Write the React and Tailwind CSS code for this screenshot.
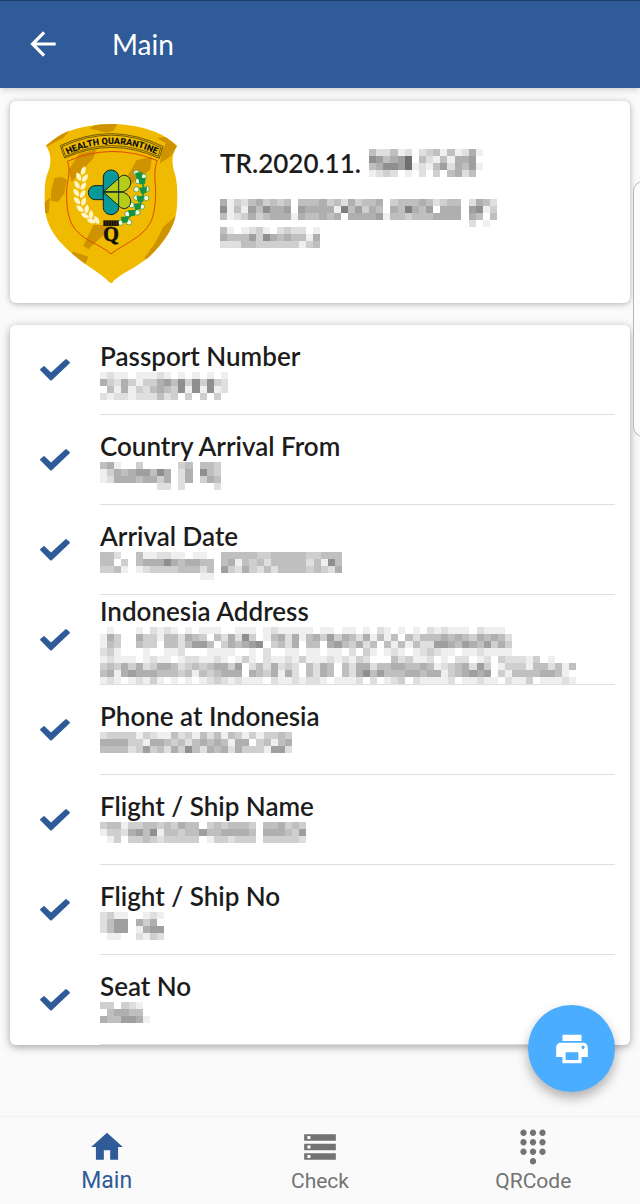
import { MdArrowBack, MdDialpad, MdHome, MdPrint, MdStorage } from 'react-icons/md';

// Each digit is the darkness of one mosaic block
const passport = {
  number: ['4224120234141251', '7645690421415560', '4577691214625461', '1232010203045240'],
  name: [
    '513245343404445342534450344454234402542',
    '714164755606555518463540548546055506713',
    '412353455515445450555561443444555505404',
    '000000000000000000000000000000000002010',
  ],
  country: ['41012310232201', '54446375454415', '22244333333134'],
};

const fields = [
  {
    label: 'Passport Number',
    rows: ['121101112101010101', '532531335647373732', '041513245437171712', '212212224230303030'],
  },
  {
    label: 'Country Arrival From',
    rows: ['45100300000340443', '13545664750250743', '12555455350250354', '00000000220200002'],
  },
  {
    label: 'Arrival Date',
    rows: [
      '4420041122110110044444334444433444',
      '4403045557545544045143424444424174',
      '3341012333344424063253242444434325',
      '0000000000000011000000000000000000',
    ],
  },
  {
    label: 'Indonesia Address',
    rows: [
      '0100010212101011100111012111110110110102101010212111021110',
      '1530053314425430425273014525145363542514140424445454354542',
      '1430043304424664035456703425044056435240414142266546546353',
      '2310001001120001111001020011011011020310121012321101121111',
      '1211101211012211210131021121311121213200042311201022012032221301000',
      '3435352355423434553602425232042540425524455445412345263013331442414',
      '4515655544434143455505435152042540425746444554551345656031444455410',
      '1210121310101012321211102112122101112020123021111201121102113011121',
    ],
  },
  {
    label: 'Phone at Indonesia',
    rows: ['233331321142314241431313343', '555533155434245454155034145', '444423634253742545253331662'],
  },
  {
    label: 'Flight / Ship Name',
    rows: ['34413344343544034344430445343', '13325647144344644555540555436', '01303343233333013323330333332'],
  },
  {
    label: 'Flight / Ship No',
    rows: ['231100121', '246605350', '246601566', '011002132'],
  },
  {
    label: 'Seat No',
    rows: ['3303210', '0455440', '5446651'],
  },
];

const tabs = [
  { label: 'Main', icon: MdHome, active: true },
  { label: 'Check', icon: MdStorage },
  { label: 'QRCode', icon: MdDialpad },
];

function Mosaic({ rows }) {
  const cols = Math.max(...rows.map((row) => row.length));

  return (
    <svg
      width={Math.round((cols * 64) / 9)}
      height={Math.round((rows.length * 64) / 9)}
      viewBox={`0 0 ${cols} ${rows.length}`}
      preserveAspectRatio="none"
      shapeRendering="crispEdges"
      className="block shrink-0"
      aria-label="Hidden"
      role="img"
    >
      {rows.map((row, y) =>
        row.split('').map((level, x) => {
          const tone = 255 - Number(level) * 16;
          return <rect key={`${x}-${y}`} x={x} y={y} width="1" height="1" fill={`rgb(${tone},${tone},${tone})`} />;
        })
      )}
    </svg>
  );
}

function CheckIcon() {
  return (
    <svg width="30" height="22" viewBox="0 0 90 66" className="shrink-0" aria-hidden="true">
      <path
        d="M4 32 L12 25 L33 45 L78 4 L86 11 L33 61 Z"
        fill="#2f5b98"
        stroke="#2f5b98"
        strokeWidth="7"
        strokeLinejoin="round"
      />
    </svg>
  );
}

function Shield() {
  const leaves = [
    [160, 182, 20], [146, 200, -25], [165, 204, 35], [141, 224, -30], [160, 228, 35],
    [139, 248, -35], [158, 252, 30], [141, 272, -40], [161, 275, 20], [150, 296, -50],
    [170, 297, 10], [165, 317, -60], [183, 314, 0], [184, 333, -70], [200, 330, -30],
  ];
  const buds = [
    [319, 188], [341, 200], [324, 213], [350, 237], [319, 238], [349, 264], [319, 263],
    [336, 290], [305, 285], [322, 307], [292, 312], [297, 337], [272, 338],
  ];
  const sprigs = [[328, 195], [337, 212], [341, 240], [332, 266], [324, 288], [307, 308], [285, 328]];

  return (
    <svg width="134" height="162" viewBox="42 36 402 486" className="shrink-0" role="img" aria-label="Health Quarantine">
      <defs>
        <clipPath id="shield">
          <path d="M48 107 Q75 82 110 65 Q175 42 245 42 Q315 42 375 65 Q412 80 441 108 C425 132 424 158 434 190 C443 215 444 270 440 300 C435 350 400 400 360 438 C330 465 295 480 268 499 Q253 509 246 519 Q238 520 229 508 C205 485 165 465 135 438 C90 400 52 360 45 300 C42 265 42 215 53 190 C66 155 63 130 48 107 Z" />
        </clipPath>
        <path id="arc" d="M104 138 Q245 66 388 137" />
      </defs>
      <g clipPath="url(#shield)">
        <rect x="40" y="36" width="410" height="490" fill="#efba00" />
        <g fill="#cf9300">
          <path d="M44 110 L70 80 L118 62 L100 84 L54 108 Z" />
          <path d="M178 55 L205 40 L262 42 L250 62 L230 68 Z" />
          <path d="M380 84 L412 80 L445 108 L420 140 L390 160 L396 118 L408 100 Z" />
          <path d="M147 132 L200 118 L190 145 L125 215 L116 180 Z" />
          <path d="M320 150 L366 140 L360 180 L300 225 L285 210 L300 185 Z" />
          <path d="M73 205 L95 200 L111 210 L103 250 L85 275 L62 272 L64 240 Z" />
          <path d="M43 278 L60 262 L56 308 L42 312 Z" />
          <path d="M190 345 L252 345 L175 418 L160 408 Z" />
          <path d="M130 425 L175 440 L165 464 L120 436 Z" />
          <path d="M445 312 L400 350 L375 400 L342 445 L360 450 L450 350 Z" />
        </g>
      </g>
      <path
        d="M112 154 Q245 96 382 152 C370 180 376 210 377 250 C376 290 371 320 360 340 C335 385 275 405 243 432 C212 402 150 392 124 340 C112 310 109 280 110 240 C112 210 124 180 112 154 Z"
        fill="none"
        stroke="#e0480c"
        strokeWidth="3"
      />
      <path
        d="M91 107 Q245 34 398 109 L388 145 Q245 80 104 144 Z M96 110 Q245 40 392 112 L385 139 Q245 75 107 139 Z"
        fill="none"
        stroke="#332708"
        strokeWidth="2"
      />
      <text className="font-['Roboto']" fontSize="27" fontWeight="900" fill="#111" textAnchor="middle">
        <textPath href="#arc" startOffset="50%">HEALTH QUARANTINE</textPath>
      </text>
      <g fill="#fff5c9">
        {leaves.map(([x, y, turn]) => (
          <path key={`${x}-${y}`} transform={`translate(${x} ${y}) rotate(${turn})`} d="M0 -14 C9 -6 9 7 0 14 C-9 7 -9 -6 0 -14 Z" />
        ))}
      </g>
      <path d="M322 188 C350 218 346 278 310 310 Q294 326 272 338" fill="none" stroke="#139344" strokeWidth="5" />
      {buds.map(([x, y]) => (
        <circle key={`${x}-${y}`} cx={x} cy={y} r="8" fill="#fffbe0" stroke="#139344" strokeWidth="2" />
      ))}
      <g fill="#139344">
        {sprigs.map(([x, y]) => (
          <path key={`${x}-${y}`} d={`M${x - 13} ${y - 7} L${x + 10} ${y - 9} L${x + 8} ${y + 9} L${x - 8} ${y + 11} Z`} />
        ))}
      </g>
      <g stroke="#0d272a" strokeWidth="3" strokeLinejoin="round">
        <path d="M220 227 H195 A19 20 0 0 0 195 269 H220 Z" fill="#0a999b" />
        <path d="M220 246 V201 A23 21 0 0 1 266 201 V206 Z" fill="#0a999b" />
        <path d="M220 246 V293 A23 21 0 0 0 266 293 V284 Z" fill="#0a999b" />
        <path d="M220 246 L266 205 C280 187 302 198 302 217 C302 232 290 244 274 246 Z" fill="#b5cc18" />
        <path d="M220 246 L266 287 C280 304 302 294 302 275 C302 260 290 248 274 246 Z" fill="#b5cc18" />
        <path d="M220 246 H276 M266 205 V287" fill="none" />
      </g>
      <path d="M220 331 H266 V348 H220 Z" fill="#171207" />
      <path d="M228 331 V348 M236 331 V348 M244 331 V348 M252 331 V348 M260 331 V348" stroke="#a77e00" strokeWidth="1" />
      <text
        className="font-['Liberation_Serif']"
        x="243"
        y="394"
        fontSize="60"
        fontWeight="bold"
        fill="#111"
        stroke="#111"
        strokeWidth="2"
        textAnchor="middle"
      >
        Q
      </text>
    </svg>
  );
}

export default function App() {
  return (
    <div className="relative flex min-h-screen flex-col overflow-hidden bg-[#fafafa] font-['Lato',sans-serif] text-[#1c1c1c]">
      <header className="relative z-10 flex h-[88px] items-center border-t border-[#1c3d6c] bg-[#2f5b98] px-6 pb-[2px] text-white shadow-md">
        <button type="button" aria-label="Back" className="flex w-[88px] items-center">
          <MdArrowBack className="size-[38px]" />
        </button>
        <h1 className="text-[28px] leading-8">Main</h1>
      </header>

      <main className="relative flex flex-1 flex-col gap-[22px] px-[10px] pt-[13px] pb-[71px]">
        <section className="flex h-[202px] gap-[42px] rounded-md bg-white pl-[34px] shadow-[0_1px_6px_rgba(0,0,0,0.3)]">
          <div className="pt-[21px]">
            <Shield />
          </div>
          <div className="pt-[46px]">
            <div className="flex h-8 items-center gap-2">
              <h2 className="text-[26px] leading-8 font-semibold">TR.2020.11.</h2>
              <Mosaic rows={passport.number} />
            </div>
            <div className="mt-5">
              <Mosaic rows={passport.name} />
              <Mosaic rows={passport.country} />
            </div>
          </div>
        </section>

        <section className="rounded-md bg-white shadow-[0_2px_8px_rgba(0,0,0,0.35)]">
          <ul>
            {fields.map((field) => (
              <li key={field.label} className="flex h-[90px] items-center gap-[30px] pr-[15px] pl-[30px]">
                <CheckIcon />
                <div className="flex h-full min-w-0 flex-1 flex-col justify-center border-b border-[#dedede]">
                  <h3 className="text-[26px] leading-8 font-semibold">{field.label}</h3>
                  <div className="min-h-7">
                    <Mosaic rows={field.rows} />
                  </div>
                </div>
              </li>
            ))}
          </ul>
        </section>

        <button
          type="button"
          aria-label="Print"
          className="absolute right-[25px] bottom-6 flex size-[87px] items-center justify-center rounded-full bg-[#4aadff] text-white shadow-[0_6px_12px_rgba(0,0,0,0.3)]"
        >
          <MdPrint className="size-[38px]" />
        </button>
      </main>

      <nav className="grid h-[88px] grid-cols-3 border-t border-[#f2f2f2] bg-[#fafafa] font-['Roboto',sans-serif]">
        {tabs.map(({ label, icon: Icon, active }) => (
          <a
            key={label}
            href="#"
            className={`flex flex-col items-center gap-px pt-[11px] ${active ? 'text-[23px] text-[#2f5b98]' : 'text-[21px] text-[#737373]'}`}
          >
            <Icon className="size-[38px]" />
            <span className="leading-7">{label}</span>
          </a>
        ))}
      </nav>

      {/* Edge panel handle */}
      <div className="absolute top-[181px] -right-5 z-20 h-[256px] w-[27px] rounded-[10px] border border-[#b5b5b5] bg-[#fcfcfc]" />
    </div>
  );
}
